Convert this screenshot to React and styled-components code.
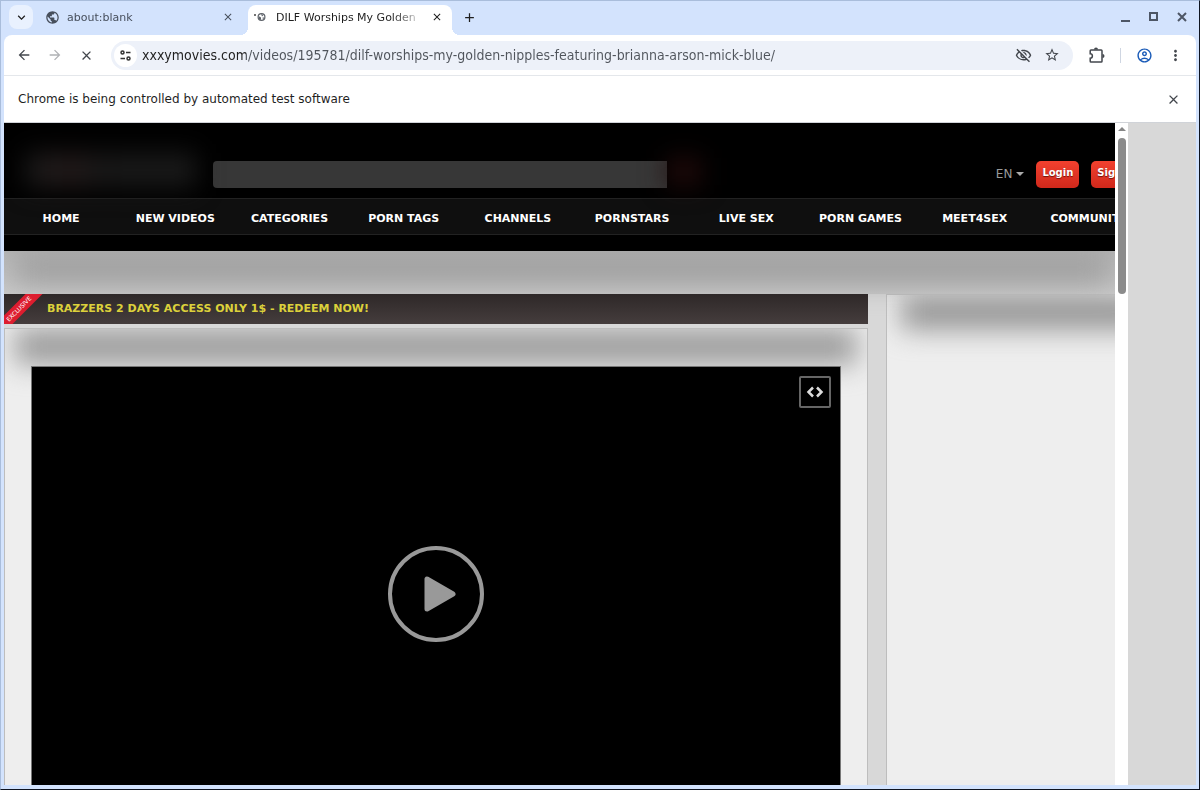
import styled, { createGlobalStyle } from "styled-components";
import {
  MdArrowBack,
  MdArrowForward,
  MdClose,
  MdAdd,
  MdExpandMore,
  MdPublic,
  MdOutlineVisibilityOff,
  MdStarOutline,
  MdOutlineAccountCircle,
  MdMoreVert,
} from "react-icons/md";

const GlobalStyle = createGlobalStyle`
  * {
    box-sizing: border-box;
  }
  body {
    margin: 0;
    font-family: "DejaVu Sans", sans-serif;
    font-size: 12px;
    color: #1f1f1f;
  }
  button, input {
    font: inherit;
    color: inherit;
    border: none;
    padding: 0;
    margin: 0;
    background: none;
  }
  button {
    display: flex;
    align-items: center;
    justify-content: center;
    flex-shrink: 0;
    cursor: pointer;
  }
  a {
    color: inherit;
    text-decoration: none;
  }
  svg {
    display: block;
    flex-shrink: 0;
  }
`;

/* browser window */
const Window = styled.div`
  display: flex;
  flex-direction: column;
  height: 100vh;
  padding: 0 3px 4px;
  background: #d3e3fd;
  border: 1px solid #a9bddb;
  border-right-color: #0e1420;
  border-bottom-color: #0e1420;
  overflow: hidden;
`;

const TabStrip = styled.div`
  display: flex;
  flex-shrink: 0;
  height: 34px;
  padding: 4px 6px 0 5px;
`;

const TabSearch = styled.button`
  width: 24px;
  height: 24px;
  border-radius: 8px;
  background: #e9f1fe;
`;

const Tab = styled.div`
  position: relative;
  display: flex;
  align-items: center;
  width: ${(props) => (props.$active ? "204px" : "203px")};
  margin-left: ${(props) => (props.$active ? "1px" : "11px")};
  padding: ${(props) => (props.$active ? "0 7px 6px 5px" : "0 11px 6px 1px")};
  color: ${(props) => (props.$active ? "#1f1f1f" : "#474f5c")};
  background: ${(props) => (props.$active ? "#fff" : "transparent")};
  border-radius: 8px 8px 0 0;
  button {
    width: 16px;
    height: 16px;
    margin-left: auto;
  }
  &::before,
  &::after {
    content: "";
    display: ${(props) => (props.$active ? "block" : "none")};
    position: absolute;
    bottom: 0;
    width: 8px;
    height: 8px;
  }
  &::before {
    left: -8px;
    background: radial-gradient(circle at 0 0, transparent 8px, #fff 8px);
  }
  &::after {
    right: -8px;
    background: radial-gradient(circle at 100% 0, transparent 8px, #fff 8px);
  }
`;

const TabTitle = styled.span`
  width: 146px;
  margin-left: ${(props) => (props.$loading ? "9px" : "7px")};
  overflow: hidden;
  font-size: 11px;
  white-space: nowrap;
  mask-image: linear-gradient(90deg, #000 116px, transparent 150px);
`;

const NewTab = styled.button`
  width: 16px;
  height: 24px;
  margin-left: 9px;
`;

const WindowButtons = styled.div`
  display: flex;
  gap: 12px;
  margin-left: auto;
  button {
    width: 16px;
    height: 24px;
  }
`;

const Toolbar = styled.div`
  display: flex;
  align-items: center;
  flex-shrink: 0;
  height: 41px;
  padding: 0 12px 0 11px;
  background: #fff;
  border-radius: 8px 8px 0 0;
  border-bottom: 1px solid #e4e7eb;
  color: #43474d;
`;

const NavButtons = styled.div`
  display: flex;
  gap: 13px;
  margin-right: 16px;
  button {
    width: 18px;
    height: 24px;
  }
  button:disabled {
    color: #b0b2b5;
  }
`;

const AddressBar = styled.form`
  display: flex;
  align-items: center;
  flex: 1;
  gap: 12px;
  height: 29px;
  padding: 0 13px 0 3px;
  border-radius: 15px;
  background: #edf1f9;
`;

const SiteInfo = styled.button`
  width: 23px;
  height: 23px;
  border-radius: 50%;
  background: #fff;
`;

const Url = styled.input`
  flex: 1;
  min-width: 0;
  margin-left: -7px;
  font-family: "DejaVu Sans Condensed", "DejaVu Sans", sans-serif;
  font-size: 14px;
  outline: none;
  color: transparent;
  background: linear-gradient(90deg, #1f1f1f 104px, #50555c 104px);
  background-clip: text;
`;

const ToolbarEnd = styled.div`
  display: flex;
  align-items: center;
  margin-left: 15px;
  button {
    width: 18px;
    height: 24px;
  }
  button:last-child {
    margin-left: 13px;
  }
`;

const Divider = styled.span`
  width: 1px;
  height: 15px;
  margin: 0 14px;
  background: #cfd6e2;
`;

const InfoBar = styled.div`
  display: flex;
  align-items: center;
  justify-content: space-between;
  flex-shrink: 0;
  height: 47px;
  padding: 0 15px 0 14px;
  background: #fff;
  border-bottom: 1px solid #d0d3d8;
  button {
    color: #43474d;
  }
`;

const Viewport = styled.div`
  display: flex;
  flex: 1;
  min-height: 0;
  background: #d8d8d8;
`;

/* the site inside the tab */
const Site = styled.div`
  flex: 1;
  min-width: 0;
  overflow: hidden;
`;

const SiteInner = styled.div`
  display: flex;
  flex-direction: column;
  min-width: 1142px;
`;

const SiteHeader = styled.header`
  position: relative;
  z-index: 1;
  padding-bottom: 16px;
  background: #000;
  color: #fff;
`;

const HeaderTop = styled.div`
  display: flex;
  align-items: center;
  height: 75px;
  padding: 27px 0 0 22px;
`;

const Logo = styled.a`
  width: 170px;
  height: 34px;
  margin: -8px 17px 0 0;
  background: linear-gradient(90deg, #1c1c1c, #241a1a 28%, #191919 42%, #1b1b1b);
  filter: blur(13px);
`;

const Search = styled.form`
  display: flex;
  align-items: center;
  input {
    width: 454px;
    height: 27px;
    padding: 0 10px;
    border-radius: 4px 0 0 4px;
    background: #373737;
    color: #fff;
  }
  button {
    width: 34px;
    height: 27px;
    margin-top: -6px;
    background: #220a0a;
    filter: blur(13px);
  }
`;

const Account = styled.div`
  display: flex;
  align-items: center;
  gap: 12px;
  margin-left: auto;
`;

const Language = styled.button`
  gap: 4px;
  color: #9a9a9a;
  &::after {
    content: "";
    border: 4px solid transparent;
    border-top-color: #aaa;
    border-bottom: none;
  }
`;

const RedButton = styled.button`
  height: 27px;
  padding: 0 6px 3px;
  border-radius: 5px;
  background: linear-gradient(#f2412f, #cf281b);
  font-size: 10px;
  font-weight: bold;
  text-shadow: 0 1px 1px #6d120b;
`;

const Menu = styled.nav`
  display: grid;
  grid-template-columns: repeat(10, 1fr);
  align-items: center;
  height: 37px;
  padding-top: 4px;
  background: #0f0f0f;
  border-top: 1px solid #222;
  border-bottom: 1px solid #222;
  font-size: 11px;
  font-weight: bold;
  text-align: center;
`;

const BlurLine = styled.div`
  height: ${(props) => props.$height};
  margin: ${(props) => props.$margin};
  background: ${(props) => props.$color};
  filter: blur(14px);
`;

const TopStrip = styled.div`
  height: 43px;
  background: linear-gradient(#b4b4b4, #c8c8c8);
`;

const Columns = styled.main`
  display: flex;
  gap: 18px;
`;

const MainColumn = styled.div`
  flex: 1;
`;

const Promo = styled.a`
  position: relative;
  display: flex;
  align-items: center;
  height: 30px;
  margin-bottom: 4px;
  padding: 0 0 1px 43px;
  overflow: hidden;
  background: linear-gradient(#2e2828, #453d3d);
  color: #dcd13b;
  font-size: 11px;
  font-weight: bold;
`;

const Ribbon = styled.span`
  position: absolute;
  top: 9px;
  left: -15px;
  width: 60px;
  height: 12px;
  line-height: 12px;
  background: #dd1d2f;
  color: #fff;
  font-size: 6px;
  font-weight: normal;
  text-align: center;
  transform: rotate(-45deg);
`;

const Panel = styled.section`
  background: #eee;
  border: 1px solid #bdbdbd;
  overflow: hidden;
`;

const Player = styled.div`
  position: relative;
  display: flex;
  align-items: center;
  justify-content: center;
  aspect-ratio: 16 / 9;
  margin: 0 26px 26px;
  background: #000;
  border: 1px solid #777;
`;

const EmbedButton = styled.button`
  position: absolute;
  top: 9px;
  right: 9px;
  width: 32px;
  height: 32px;
  border: 2px solid #666;
  border-radius: 2px;
`;

const SidePanel = styled(Panel)`
  flex: 0 0 260px;
`;

const ScrollBar = styled.div`
  display: flex;
  flex-direction: column;
  align-items: center;
  gap: 7px;
  width: 13px;
  margin-right: 68px;
  padding-top: 4px;
  background: #fff;
`;

const ScrollUp = styled.span`
  border: 4px solid transparent;
  border-bottom: 4px solid #858585;
  border-top: none;
`;

const Thumb = styled.span`
  width: 8px;
  height: 156px;
  border-radius: 4px;
  background: #8b8b8b;
`;

const menuItems = [
  "HOME",
  "NEW VIDEOS",
  "CATEGORIES",
  "PORN TAGS",
  "CHANNELS",
  "PORNSTARS",
  "LIVE SEX",
  "PORN GAMES",
  "MEET4SEX",
  "COMMUNITY",
];

const LoadingIcon = () => (
  <svg width="14" height="14" viewBox="0 0 14 14">
    <circle cx="2" cy="5" r="1" fill="#444" />
    <circle cx="8.5" cy="7" r="3.4" fill="#fff" stroke="#5d6269" strokeWidth="1.2" />
    <path d="M5.500 6 8 7.500v2.500L6 9ZM8 4l2.500 1L9 6.500Z" fill="#5d6269" />
    <path d="M9.500 7.500h2L10 9.500Z" fill="#5d6269" />
  </svg>
);

const TuneIcon = () => (
  <svg width="13" height="13" viewBox="0 0 13 13" fill="none" stroke="#333" strokeWidth="1.5">
    <circle cx="3.500" cy="3.500" r="1.500" />
    <path d="M7 3.500h4.500M1.500 9.500H6" />
    <circle cx="9.500" cy="9.500" r="1.500" />
  </svg>
);

const ExtensionIcon = () => (
  <svg width="18" height="18" viewBox="0 0 18 18">
    <path
      d="M3 4h10.2q.8 0 .8.8v10.4q0 .8-.8.8H3q-.8 0-.8-.8v-3a2.2 2.2 0 0 0 0-4.400V4.800Q2.200 4 3 4Z"
      fill="none"
      stroke="#43474d"
      strokeWidth="1.500"
    />
    <path d="M6 3.500a2 2 0 0 1 4 0ZM14.500 8a2 2 0 0 1 0 4Z" fill="#43474d" />
  </svg>
);

const PlayIcon = () => (
  <svg width="96" height="96" viewBox="0 0 96 96">
    <circle cx="48" cy="48" r="46" fill="none" stroke="#999" strokeWidth="4" />
    <path
      d="M39 33v30l26-15Z"
      fill="#999"
      stroke="#999"
      strokeWidth="5"
      strokeLinejoin="round"
    />
  </svg>
);

function App() {
  return (
    <Window>
      <GlobalStyle />
      <TabStrip>
        <TabSearch aria-label="Search tabs">
          <MdExpandMore size={15} />
        </TabSearch>
        <Tab>
          <MdPublic size={15} />
          <TabTitle>about:blank</TabTitle>
          <button aria-label="Close tab">
            <MdClose size={12} />
          </button>
        </Tab>
        <Tab $active>
          <LoadingIcon />
          <TabTitle $loading>DILF Worships My Golden</TabTitle>
          <button aria-label="Close tab">
            <MdClose size={12} />
          </button>
        </Tab>
        <NewTab aria-label="New tab">
          <MdAdd size={15} />
        </NewTab>
        <WindowButtons>
          <button aria-label="Minimize">
            <svg width="10" height="10" stroke="#4d5665" strokeWidth="2">
              <path d="M0 9h9" />
            </svg>
          </button>
          <button aria-label="Maximize">
            <svg width="10" height="10" fill="none" stroke="#4d5665" strokeWidth="2">
              <path d="M1 1h7v7H1Z" />
            </svg>
          </button>
          <button aria-label="Close">
            <svg width="10" height="10" stroke="#4d5665" strokeWidth="2">
              <path d="m1 1 8 8M9 1 1 9" />
            </svg>
          </button>
        </WindowButtons>
      </TabStrip>

      <Toolbar>
        <NavButtons>
          <button aria-label="Back">
            <MdArrowBack size={16} />
          </button>
          <button aria-label="Forward" disabled>
            <MdArrowForward size={16} />
          </button>
          <button aria-label="Stop">
            <MdClose size={15} />
          </button>
        </NavButtons>
        <AddressBar onSubmit={(e) => e.preventDefault()}>
          <SiteInfo type="button" aria-label="Site information">
            <TuneIcon />
          </SiteInfo>
          <Url
            aria-label="Address"
            defaultValue="xxxymovies.com/videos/195781/dilf-worships-my-golden-nipples-featuring-brianna-arson-mick-blue/"
          />
          <button type="button" aria-label="Tracking protection">
            <MdOutlineVisibilityOff size={17} />
          </button>
          <button type="button" aria-label="Bookmark">
            <MdStarOutline size={16} />
          </button>
        </AddressBar>
        <ToolbarEnd>
          <button aria-label="Extensions">
            <ExtensionIcon />
          </button>
          <Divider />
          <button aria-label="Profile">
            <MdOutlineAccountCircle size={17} color="#1a5bb8" />
          </button>
          <button aria-label="Menu">
            <MdMoreVert size={17} />
          </button>
        </ToolbarEnd>
      </Toolbar>

      <InfoBar>
        <span>Chrome is being controlled by automated test software</span>
        <button aria-label="Dismiss">
          <MdClose size={15} />
        </button>
      </InfoBar>

      <Viewport>
        <Site>
          <SiteInner>
            <SiteHeader>
              <HeaderTop>
                <Logo href="#" aria-label="Home" />
                <Search onSubmit={(e) => e.preventDefault()}>
                  <input type="text" aria-label="Search" />
                  <button aria-label="Search" />
                </Search>
                <Account>
                  <Language>EN</Language>
                  <RedButton>Login</RedButton>
                  <RedButton>Sign up</RedButton>
                </Account>
              </HeaderTop>
              <Menu>
                {menuItems.map((item) => (
                  <a href="#" key={item}>
                    {item}
                  </a>
                ))}
              </Menu>
            </SiteHeader>
            <TopStrip>
              <BlurLine $height="32px" $margin="0 36px 0 12px" $color="#9f9f9f" />
            </TopStrip>
            <Columns>
              <MainColumn>
                <Promo href="#">
                  <Ribbon>EXCLUSIVE</Ribbon>
                  BRAZZERS 2 DAYS ACCESS ONLY 1$ - REDEEM NOW!
                </Promo>
                <Panel>
                  <BlurLine $height="35px" $margin="0 10px 2px" $color="#989898" />
                  <Player>
                    <EmbedButton aria-label="Embed">
                      <svg width="18" height="12" fill="none" stroke="#ddd" strokeWidth="2.5">
                        <path d="M7 1.500 2.500 6 7 10.500M11 1.500 15.500 6 11 10.500" />
                      </svg>
                    </EmbedButton>
                    <button aria-label="Play">
                      <PlayIcon />
                    </button>
                  </Player>
                </Panel>
              </MainColumn>
              <SidePanel>
                <BlurLine $height="34px" $margin="0 0 0 14px" $color="#929292" />
              </SidePanel>
            </Columns>
          </SiteInner>
        </Site>
        <ScrollBar>
          <ScrollUp />
          <Thumb />
        </ScrollBar>
      </Viewport>
    </Window>
  );
}

export default App;
